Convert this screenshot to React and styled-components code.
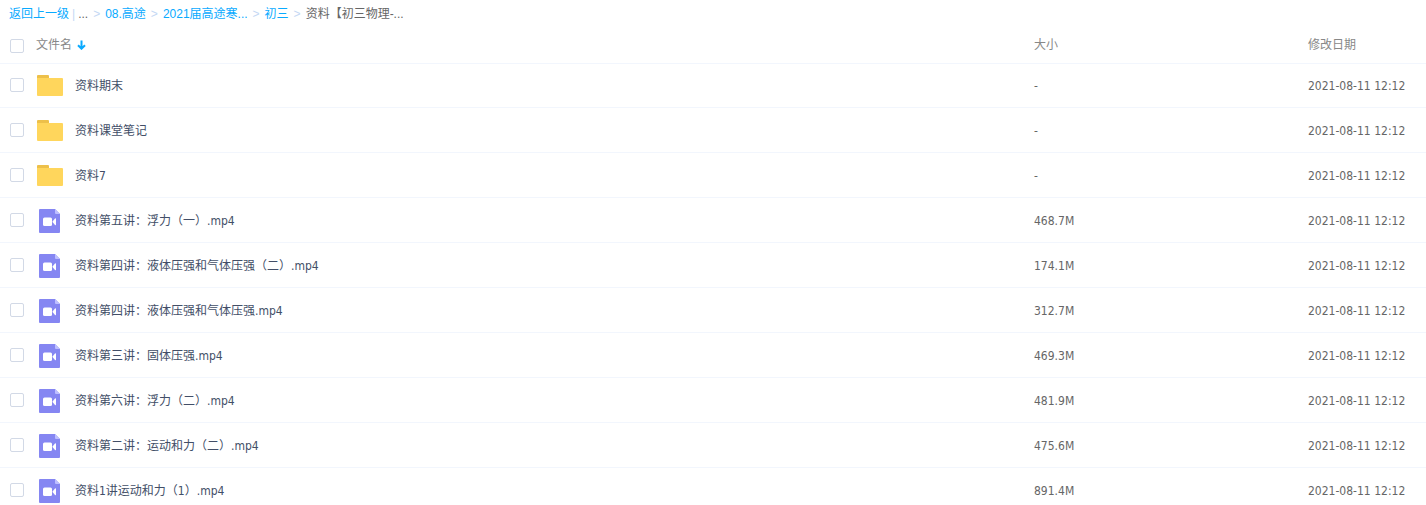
import React from "react";
import styled, { createGlobalStyle } from "styled-components";

const GlobalStyle = createGlobalStyle`
    body {
        margin: 0;
        background: #fff;
        font-family: "DejaVu Sans Condensed", "Noto Sans CJK SC", sans-serif;
        font-size: 12px;
        line-height: 16px;
        color: #666;
    }
`

const Crumbs = styled.nav`
    display: flex;
    align-items: center;
    height: 28px;
    padding: 0 9px;
    font-family: "Liberation Sans", "Noto Sans CJK SC", sans-serif;
    white-space: nowrap;
`

const CrumbLink = styled.a`
    color: #09aaff;
    text-decoration: none;
`

const Divider = styled.span`
    margin: 0 3px;
    color: #c4d8f4;
`

const Arrow = styled.span`
    margin: 0 5px;
    color: #c4d8f4;
`

const Table = styled.table`
    width: 100%;
    table-layout: fixed;
    border-collapse: separate;
    border-spacing: 0;
`

const Th = styled.th`
    box-sizing: border-box;
    width: ${props => props.$width || "auto"};
    height: 35px;
    padding: 0 0 ${props => props.$text ? "2px" : "0"};
    font-weight: normal;
    text-align: left;
    color: #888;
`

const Row = styled.tr`
    &:first-child td {
        box-shadow: inset 0 1px #f2f6fd;
    }
`

const Td = styled.td`
    box-sizing: border-box;
    height: 45px;
    padding: ${props => props.$text ? "2px" : "0"} 0 0;
    border-bottom: 1px solid #f2f6fd;
    white-space: nowrap;
`

const Check = styled.input`
    appearance: none;
    display: block;
    box-sizing: border-box;
    width: 14px;
    height: 14px;
    margin: 0 0 0 10px;
    border: 1px solid #d2d9e6;
    border-radius: 2px;
    background: #fff;

    &:checked {
        background: #09aaff;
        border-color: #09aaff;
    }
`

const SortButton = styled.button`
    display: flex;
    align-items: center;
    gap: 5px;
    padding: 0;
    border: 0;
    background: none;
    font: inherit;
    color: inherit;
`

const FileCell = styled.div`
    display: flex;
    align-items: center;
    gap: 12px;
`

const FileLink = styled.a`
    padding-top: 2px;
    color: #424e67;
    text-decoration: none;
`

const Icon = styled.svg`
    display: block;
    flex: none;
`

function FolderIcon() {
    return (
        <Icon width="27" height="26" viewBox="0 0 27 26">
            <path d="M1 8V4a1 1 0 0 1 1-1h10a1 1 0 0 1 1 1v4z" fill="#edc04a"/>
            <path d="M1 6h25a1 1 0 0 1 1 1v16a1 1 0 0 1-1 1H2a1 1 0 0 1-1-1z" fill="#ffd65c"/>
        </Icon>
    )
}

function VideoIcon() {
    return (
        <Icon width="27" height="26" viewBox="0 0 27 26">
            <path d="M4 2h15l5 5v18a1 1 0 0 1-1 1H4a1 1 0 0 1-1-1V3a1 1 0 0 1 1-1z" fill="#8586f2"/>
            <path d="M19 2l5 5h-4a1 1 0 0 1-1-1z" fill="#bebfff"/>
            <rect x="7" y="10.500" width="9" height="8.500" rx="1.500" fill="#fff"/>
            <path d="M16.300 14.800L19 11.600q1-.8 1 .4v5.600q0 1.200-1 .4z" fill="#fff"/>
        </Icon>
    )
}

function DownIcon() {
    return (
        <Icon width="9" height="10" viewBox="0 0 9 10">
            <path d="M4.500 0.500V9M1 5.300L4.500 8.700L8 5.300" fill="none" stroke="#09aaff" strokeWidth="2"/>
        </Icon>
    )
}

const parents = ["08.高途", "2021届高途寒...", "初三"];

const files = [
    { name: "资料期末", folder: true },
    { name: "资料课堂笔记", folder: true },
    { name: "资料7", folder: true },
    { name: "资料第五讲：浮力（一）.mp4", size: "468.7M" },
    { name: "资料第四讲：液体压强和气体压强（二）.mp4", size: "174.1M" },
    { name: "资料第四讲：液体压强和气体压强.mp4", size: "312.7M" },
    { name: "资料第三讲：固体压强.mp4", size: "469.3M" },
    { name: "资料第六讲：浮力（二）.mp4", size: "481.9M" },
    { name: "资料第二讲：运动和力（二）.mp4", size: "475.6M" },
    { name: "资料1讲运动和力（1）.mp4", size: "891.4M" },
];

function FileRow(props) {
    return (
        <Row>
            <Td><Check type="checkbox" aria-label={props.name}/></Td>
            <Td>
                <FileCell>
                    {props.folder ? <FolderIcon/> : <VideoIcon/>}
                    <FileLink href="#">{props.name}</FileLink>
                </FileCell>
            </Td>
            <Td $text>{props.size || "-"}</Td>
            <Td $text>2021-08-11 12:12</Td>
        </Row>
    )
}

export default function App() {
    return (
        <>
            <GlobalStyle/>
            <Crumbs>
                <CrumbLink href="#">返回上一级</CrumbLink>
                <Divider>|</Divider>
                <span>...</span>
                {parents.map(name => (
                    <React.Fragment key={name}>
                        <Arrow>&gt;</Arrow>
                        <CrumbLink href="#">{name}</CrumbLink>
                    </React.Fragment>
                ))}
                <Arrow>&gt;</Arrow>
                <span>资料【初三物理-...</span>
            </Crumbs>
            <Table>
                <thead>
                    <tr>
                        <Th $width="36px"><Check type="checkbox" aria-label="全选"/></Th>
                        <Th $text><SortButton type="button">文件名<DownIcon/></SortButton></Th>
                        <Th $text $width="274px">大小</Th>
                        <Th $text $width="118px">修改日期</Th>
                    </tr>
                </thead>
                <tbody>
                    {files.map(file => <FileRow key={file.name} {...file}/>)}
                </tbody>
            </Table>
        </>
    )
}
